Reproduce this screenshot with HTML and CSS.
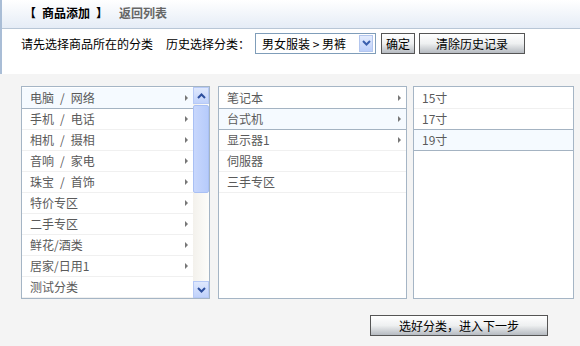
FILE: index.html
```html
<!DOCTYPE html>
<html lang="zh-CN">
<head>
    <meta charset="UTF-8">
    <title>商品添加</title>
    <link rel="stylesheet" href="styles.css">
</head>
<body>
    <!-- Top panel: title and history row -->
    <div class="top">
        <div class="title-bar">
            <span class="title">【&ensp;商品添加&ensp;】</span>
            <a class="back" href="#">返回列表</a>
        </div>
        <div class="filter-row">
            <span class="hint">请先选择商品所在的分类</span>
            <span class="label">历史选择分类：</span>
            <div class="select">
                <span class="select-text">男女服装 &gt; 男裤</span>
                <span class="select-btn">
                    <svg width="9" height="6" viewBox="0 0 9 6"><polyline points="1,1 4.5,4.5 8,1" fill="none" stroke="#3a5fae" stroke-width="2"/></svg>
                </span>
            </div>
            <button class="btn btn-ok">确定</button>
            <button class="btn btn-clear">清除历史记录</button>
        </div>
    </div>

    <!-- Category picker -->
    <div class="picker">
        <div class="box box-first">
            <ul class="list">
                <li class="item on">电脑&ensp;/&ensp;网络<i class="arrow"></i></li>
                <li class="item">手机&ensp;/&ensp;电话<i class="arrow"></i></li>
                <li class="item">相机&ensp;/&ensp;摄相<i class="arrow"></i></li>
                <li class="item">音响&ensp;/&ensp;家电<i class="arrow"></i></li>
                <li class="item">珠宝&ensp;/&ensp;首饰<i class="arrow"></i></li>
                <li class="item">特价专区<i class="arrow"></i></li>
                <li class="item">二手专区<i class="arrow"></i></li>
                <li class="item">鲜花/酒类<i class="arrow"></i></li>
                <li class="item">居家/日用1<i class="arrow"></i></li>
                <li class="item">测试分类</li>
            </ul>
            <div class="scrollbar">
                <div class="sb-btn">
                    <svg width="9" height="6" viewBox="0 0 9 6"><polyline points="1,5 4.5,1.5 8,5" fill="none" stroke="#2d4f9e" stroke-width="2"/></svg>
                </div>
                <div class="sb-thumb"></div>
                <div class="sb-track"></div>
                <div class="sb-btn">
                    <svg width="9" height="6" viewBox="0 0 9 6"><polyline points="1,1 4.5,4.5 8,1" fill="none" stroke="#2d4f9e" stroke-width="2"/></svg>
                </div>
            </div>
        </div>

        <div class="box box-second">
            <ul class="list">
                <li class="item">笔记本<i class="arrow"></i></li>
                <li class="item on">台式机<i class="arrow"></i></li>
                <li class="item">显示器1<i class="arrow"></i></li>
                <li class="item">伺服器</li>
                <li class="item">三手专区</li>
            </ul>
        </div>

        <div class="box box-third">
            <ul class="list">
                <li class="item">15寸</li>
                <li class="item">17寸</li>
                <li class="item on">19寸</li>
            </ul>
        </div>
    </div>

    <div class="footer">
        <button class="btn btn-next">选好分类，进入下一步</button>
    </div>
</body>
</html>
```

FILE: styles.css
```css
/* General body styling */
body {
    font-family: "Noto Sans CJK SC", "DejaVu Sans", sans-serif;
    font-size: 12px;
    background-color: #f4f4f4;
    margin: 0;
    padding: 0;
    color: #000;
}

/* Top panel */
.top {
    background-color: #fff;
    border-left: 2px solid #a9bdd6;
    height: 74px;
}

.title-bar {
    height: 29px;
    background: linear-gradient(#ffffff, #e5ecf6);
    border-bottom: 1px solid #b8c6d6;
    display: flex;
    align-items: center;
    padding: 0 0 4px 22px;
    box-sizing: border-box;
    font-weight: bold;
}

.title {
    color: #000;
    margin-right: 11px;
}

.back {
    color: #666;
    text-decoration: none;
}

.filter-row {
    display: flex;
    align-items: center;
    height: 26px;
    padding-left: 19px;
    margin-top: 1px;
}

.hint {
    margin-right: 13px;
}

.label {
    margin-right: 5px;
}

/* Fake select box */
.select {
    width: 121px;
    height: 21px;
    box-sizing: border-box;
    border: 1px solid #7f9db9;
    background: #fff;
    display: flex;
    align-items: center;
    justify-content: space-between;
    padding: 0 2px 0 6px;
}

.select-btn {
    width: 14px;
    height: 17px;
    box-sizing: border-box;
    border: 1px solid #b3c6ee;
    background: linear-gradient(#e4ecfd, #bccffa);
    display: flex;
    align-items: center;
    justify-content: center;
}

/* Buttons */
.btn {
    font-family: inherit;
    font-size: 12px;
    height: 21px;
    padding: 0;
    border: 1px solid #555;
    background: linear-gradient(#ffffff 0%, #eef0f1 50%, #d7dadd 70%, #b6bbc1 100%);
    color: #000;
    cursor: pointer;
    box-sizing: border-box;
}

.btn-ok {
    width: 34px;
    margin-left: 5px;
}

.btn-clear {
    width: 106px;
    margin-left: 4px;
}

/* Category picker */
.picker {
    display: flex;
    padding: 12px 0 0 21px;
}

.box {
    height: 213px;
    box-sizing: border-box;
    border: 1px solid #a5b5c5;
    background: #fff;
    display: flex;
}

.box-first {
    width: 189px;
}

.box-second {
    width: 189px;
    margin-left: 8px;
}

.box-third {
    width: 161px;
    margin-left: 6px;
}

.list {
    list-style: none;
    margin: 0;
    padding: 1px 0 0;
    flex: 1;
    overflow: hidden;
}

.item {
    height: 20px;
    line-height: 20px;
    border-bottom: 1px solid #f0f0f0;
    padding-left: 8px;
    padding-right: 5px;
    color: #5a5a5a;
    white-space: pre;
    display: flex;
    justify-content: space-between;
    align-items: center;
}

.item.on {
    background-color: #f5faff;
    border-top: 1px solid #a4b3c2;
    border-bottom: 1px solid #a4b3c2;
    margin-top: -1px;
}

.item.on:first-child {
    border-top: 0;
    margin-top: 0;
}

.arrow {
    width: 0;
    height: 0;
    border-top: 3px solid transparent;
    border-bottom: 3px solid transparent;
    border-left: 3px solid #777;
}

/* Scrollbar on the first list */
.scrollbar {
    width: 16px;
    display: flex;
    flex-direction: column;
    background: linear-gradient(to right, #f3f1ec, #fdfdfa);
}

.sb-btn {
    height: 17px;
    box-sizing: border-box;
    border: 1px solid #b6c9f6;
    background: linear-gradient(#dfe8fd, #c0d2fb);
    display: flex;
    align-items: center;
    justify-content: center;
}

.sb-thumb {
    height: 88px;
    margin-top: 1px;
    box-sizing: border-box;
    border: 1px solid #a9c0f4;
    border-radius: 2px;
    background: linear-gradient(to right, #c8d7fc, #b6cbfb);
}

.sb-track {
    flex: 1;
}

/* Bottom action */
.footer {
    display: flex;
    justify-content: flex-end;
    padding: 16px 32px 0 0;
}

.btn-next {
    width: 178px;
}
```
